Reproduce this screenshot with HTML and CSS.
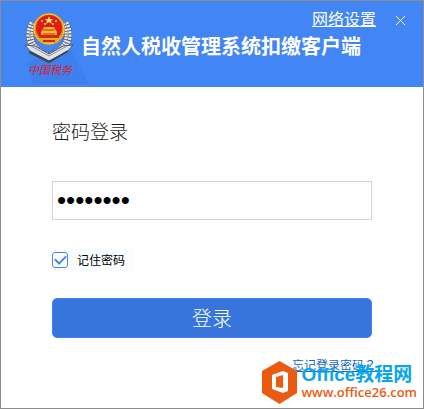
FILE: index.html
```html
<!DOCTYPE html>
<html lang="zh-CN">
<head>
<meta charset="utf-8">
<meta name="viewport" content="width=device-width, initial-scale=1">
<title>自然人税收管理系统扣缴客户端</title>
<link rel="stylesheet" href="styles.css">
</head>
<body>
<div class="window">
  <header class="banner">
    <svg class="emblem" viewBox="0 0 76 86" aria-hidden="true">
      <path class="emblem-shadow" d="M26 62 L66 42 L88 83 L32 83 Z"/>
      <g fill="none" stroke="#56606e" stroke-width="8">
        <path d="M32 22 C25 36 30 49 47 55"/>
        <path d="M64 22 C71 36 66 49 49 55"/>
      </g>
      <g fill="none" stroke="#e4e8ed" stroke-width="7" stroke-dasharray="2 1">
        <path d="M32 22 C25 36 30 49 47 55"/>
        <path d="M64 22 C71 36 66 49 49 55"/>
      </g>
      <g fill="none" stroke="#78818c" stroke-width="1" stroke-dasharray="2 2">
        <path d="M32 22 C25 36 30 49 47 55"/>
        <path d="M64 22 C71 36 66 49 49 55"/>
      </g>
      <path d="M24 44 L34 45 L48 53 L62 45 L72 44 L67 50 L48 60 L29 50 Z" fill="#dfe3e9" stroke="#4c5563" stroke-width="1"/>
      <path d="M28 51 L48 61 L67 50" fill="none" stroke="#3c4654" stroke-width="2"/>
      <path d="M30 45 L48 55 L66 45" fill="none" stroke="#8a939f" stroke-width="1"/>
      <circle cx="48" cy="28" r="16" fill="#d0921a"/>
      <circle cx="48" cy="28" r="15" fill="none" stroke="#f4cf55" stroke-width="1"/>
      <circle cx="48" cy="27" r="13" fill="#e21b14"/>
      <path d="M48 15 l1 3 h3 l-2 2 1 3 -3 -2 -3 2 1 -3 -2 -2 h3 Z" fill="#ffe36b"/>
      <g fill="#ffe36b"><circle cx="41" cy="20" r="1"/><circle cx="55" cy="20" r="1"/><circle cx="44" cy="23" r="1"/><circle cx="52" cy="23" r="1"/></g>
      <path d="M40 31 L42 28 L43 26 H53 L54 28 L56 31 V34 H40 Z" fill="#f4ba2f"/>
      <path d="M42 29 H54 M42 33 H54" stroke="#d32812" stroke-width="1"/>
      <path d="M36 36 H60 L56 42 H40 Z" fill="#e7ac24"/>
      <path d="M38 36 H58 M42 40 H54" fill="none" stroke="#d32812" stroke-width="2"/>
      <text class="emblem-text" x="27" y="73">中国税务</text>
    </svg>
    <h1 class="product">自然人税收管理系统扣缴客户端</h1>
    <nav class="window-actions" aria-label="窗口">
      <a class="settings" href="#">网络设置</a>
      <button class="close" type="button" aria-label="关闭">
        <svg viewBox="0 0 11 11" width="11" height="11" aria-hidden="true"><path d="M1 1 L10 10 M10 1 L1 10"/></svg>
      </button>
    </nav>
  </header>
  <main class="content">
    <form class="login">
      <h2 class="heading"><label for="password">密码登录</label></h2>
      <input class="password" id="password" type="password" value="12345678">
      <label class="remember"><input class="check" type="checkbox" checked><span>记住密码</span></label>
      <button class="submit" type="button">登录</button>
      <a class="forgot" href="#">忘记登录密码<span class="query" lang="zh-TW">？</span></a>
    </form>
  </main>
  <aside class="mark">
    <svg class="mark-logo" viewBox="0 0 35 43" width="35" height="43" aria-hidden="true">
      <path d="M17.500 0 L35 10 V32 L17.500 43 L0 32 V10 Z" fill="#ea5b10"/>
      <path fill-rule="evenodd" d="M10 14 L21 10 L26 12 V30 L21 32 L10 28 Z M14 16 V26 L21 27 V14 Z" fill="#fff"/>
    </svg>
    <div class="mark-lines">
      <span class="mark-name">Office教程网</span>
      <span class="mark-url">www.office26.com</span>
    </div>
  </aside>
</div>
</body>
</html>
```
FILE: styles.css
```css
* {
  box-sizing: border-box;
}

body {
  margin: 0;
  font-family: "Noto Sans CJK SC", sans-serif;
  color: #1a1a1a;
  background: #fff;
}

.window {
  position: relative;
  min-height: 100vh;
  border: 1px solid #8c8c8c;
  background: #fff;
}

.banner {
  position: relative;
  display: flex;
  align-items: center;
  height: 86px;
  gap: 4px;
  background: #4285f5;
}

.emblem {
  flex: none;
  width: 76px;
  height: 86px;
  overflow: visible;
}

.emblem-shadow {
  fill: #3e7fee;
}

.emblem-text {
  fill: #d8202c;
  font-family: "Noto Sans CJK SC", sans-serif;
  font-size: 11px;
  font-style: italic;
}

.product {
  margin: 0;
  padding-top: 4px;
  font-size: 20px;
  line-height: 30px;
  font-weight: 700;
  color: #fff;
  white-space: nowrap;
}

.window-actions {
  position: absolute;
  top: 5px;
  right: 17px;
  display: flex;
  align-items: center;
  gap: 19px;
}

.settings {
  font-size: 16px;
  line-height: 24px;
  font-weight: 400;
  color: #fff;
}

.close {
  display: flex;
  margin-top: 4px;
  padding: 0;
  border: 0;
  background: none;
}

.close path {
  fill: none;
  stroke: #fff;
  stroke-width: 1;
}

.content {
  padding: 29px 51px 28px;
}

.login {
  display: flex;
  flex-direction: column;
}

.heading {
  margin: 0 0 35px;
  font-size: 19px;
  line-height: 30px;
  font-weight: 300;
}

.password {
  width: 100%;
  height: 39px;
  padding: 0 4px;
  border: 1px solid #d2d2d2;
  outline: 0;
  font-family: "Liberation Sans", sans-serif;
  font-size: 26px;
  color: #000;
  background: #fff;
}

.remember {
  display: flex;
  align-items: center;
  align-self: flex-start;
  gap: 9px;
  height: 22px;
  margin: 29px 0 27px;
  padding-right: 8px;
  font-size: 12px;
  line-height: 16px;
  color: #000;
  background: #f9fdff;
}

.check {
  appearance: none;
  width: 16px;
  height: 16px;
  margin: 0;
  border: 1px solid #4285f5;
  border-radius: 3px;
  background: #fff;
  display: grid;
  place-items: center;
}

.check:checked::before {
  content: "";
  width: 9px;
  height: 5px;
  margin-bottom: 3px;
  border: solid #4285f5;
  border-width: 0 0 2px 2px;
  transform: rotate(-45deg);
}

.submit {
  width: 100%;
  height: 40px;
  padding: 0 0 2px;
  border: 1px solid #4285f5;
  border-radius: 5px;
  font-family: inherit;
  font-size: 20px;
  font-weight: 300;
  color: #fff;
  background: #3775dc;
}

.forgot {
  align-self: flex-end;
  margin: 18px -4px 0 0;
  font-size: 12px;
  line-height: 18px;
  color: #1766c0;
}

.query {
  font-family: "Noto Sans CJK TC", sans-serif;
}

.mark {
  position: absolute;
  right: 6px;
  bottom: 4px;
  display: flex;
  align-items: center;
  gap: 5px;
}

.mark-lines {
  display: flex;
  flex-direction: column;
  font-weight: 700;
  white-space: nowrap;
}

.mark-name {
  font-family: "Liberation Sans", "Noto Sans CJK SC", sans-serif;
  font-size: 19px;
  line-height: 18px;
  color: #09a5ee;
}

.mark-url {
  font-family: "Open Sans", sans-serif;
  font-size: 13px;
  line-height: 16px;
  font-weight: 600;
  color: #ea5b10;
}
```
